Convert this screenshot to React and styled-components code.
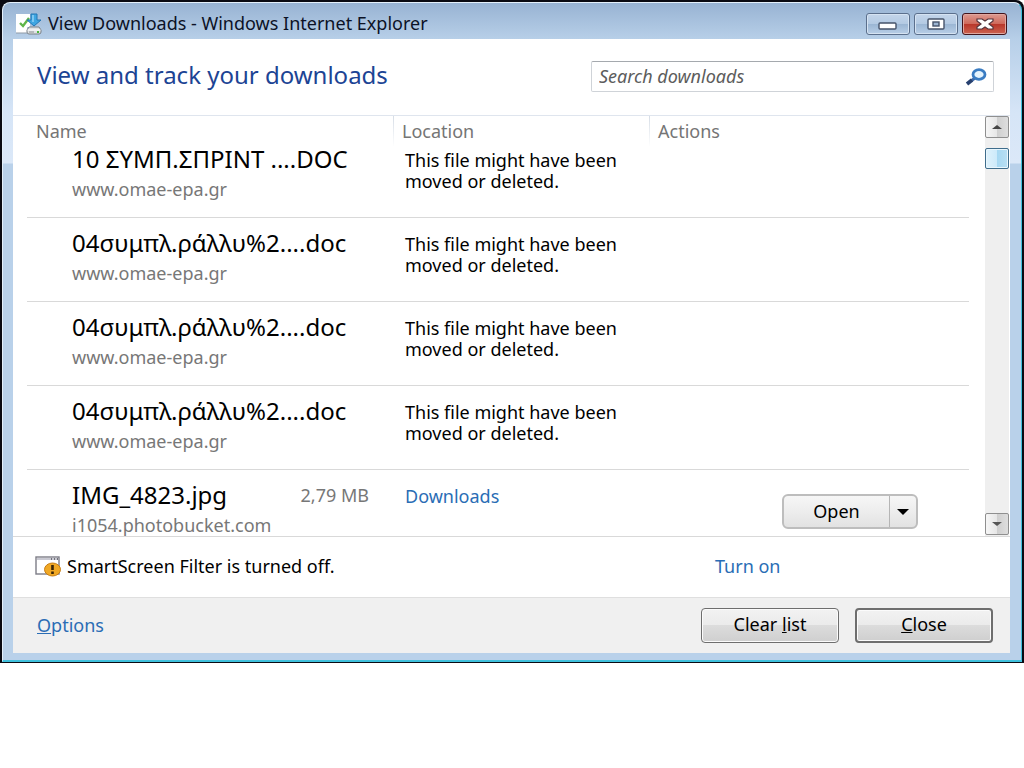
import React, { useState } from 'react'
import styled, { createGlobalStyle } from 'styled-components'

const GlobalStyle = createGlobalStyle`
  * {
    box-sizing: border-box;
  }

  body {
    margin: 0;
    background-color: #fff;
    color: #000;
    font-family: 'Noto Sans', 'Open Sans', sans-serif;
    font-size: 18px;
    line-height: 21px;
  }

  button,
  input {
    font: inherit;
    color: inherit;
  }
`

const WindowEdge = styled.div`
  background-color: #0a0a12;
  padding: 2px 2px 1px 2px;
  border-top-right-radius: 8px;
`

const WindowFrame = styled.div`
  display: flex;
  flex-direction: column;
  padding: 0 11px 7px 10px;
  border: 1px solid #e4f0fb;
  border-right-color: #3fc0dc;
  border-bottom: 2px solid #3fc0dc;
  border-radius: 8px 8px 0 0;
  background: linear-gradient(
    180deg,
    #98b3d3 0,
    #b7cfe8 36px,
    #d6e5f7 110px,
    #dbe8f8 160px,
    #b9d1ea 161px,
    #b9d1ea 100%
  );
`

const TitleBar = styled.header`
  display: flex;
  align-items: flex-start;
  justify-content: space-between;
  height: 36px;
  padding: 10px 3px 0 3px;
`

const TitleText = styled.div`
  display: flex;
  align-items: flex-start;
  gap: 6px;
  color: #0c1226;
  white-space: nowrap;
`

const WindowButtons = styled.div`
  display: flex;
  gap: 4px;
`

const WindowButton = styled.button`
  display: flex;
  align-items: center;
  justify-content: center;
  width: ${props => (props.$danger ? '45px' : '44px')};
  height: 22px;
  padding: 0;
  border: 1px solid ${props => (props.$danger ? '#43141b' : '#5b6f8c')};
  border-radius: 3px;
  box-shadow: inset 0 0 0 1px ${props => (props.$danger ? '#e0a79f' : '#d5e3f2')};
  background: ${props =>
    props.$danger
      ? 'linear-gradient(180deg, #dd9a90 0, #cf6a5c 48%, #b83529 50%, #cc6350 100%)'
      : 'linear-gradient(180deg, #c3d5ea 0, #b4cae3 48%, #9ab5d3 50%, #b8cee7 100%)'};
`

const Panel = styled.main`
  display: flex;
  flex-direction: column;
  background-color: #fff;
`

const PanelHead = styled.div`
  display: flex;
  align-items: flex-start;
  justify-content: space-between;
  height: 76px;
  padding: 22px 16px 0 24px;
`

const Heading = styled.h1`
  margin: 0;
  font-size: 24px;
  line-height: 28px;
  font-weight: 400;
  color: #1c4494;
`

const SearchBox = styled.label`
  display: flex;
  align-items: center;
  width: 403px;
  height: 31px;
  padding: 0 6px 0 7px;
  border: 1px solid #cfd3d8;
  border-top-color: #a5a9ae;
  border-radius: 2px;
`

const SearchInput = styled.input`
  flex: 1;
  min-width: 0;
  padding: 0;
  border: none;
  outline: none;
  background: none;

  &::placeholder {
    color: #5c5c5c;
    font-style: italic;
    opacity: 1;
  }
`

const ListArea = styled.div`
  display: flex;
  justify-content: space-between;
  max-height: 422px;
  overflow: hidden;
  border-top: 1px solid #dfe5ee;
  border-bottom: 1px solid #d9d9d9;
`

const DownloadTable = styled.table`
  flex: 1;
  align-self: flex-start;
  margin: 0 16px 0 14px;
  table-layout: fixed;
  border-collapse: separate;
  border-spacing: 0;
`

const HeadCell = styled.th`
  width: ${props => props.$width};
  height: 31px;
  padding: 0 0 0 9px;
  font-weight: 400;
  text-align: left;
  color: #757575;
  background: ${props =>
    props.$divider
      ? 'linear-gradient(180deg, #d6dde6 0, #fff 100%) left / 1px 100% no-repeat'
      : 'none'};
`

const Row = styled.tr`
  td {
    height: 84px;
    padding-top: 13px;
    border-bottom: 1px solid #d9d9d9;
    vertical-align: top;
  }

  &:first-child td {
    height: 71px;
    padding-top: 0;
  }
`

const NameCell = styled.td`
  padding: 0 24px 0 45px;
`

const NameLine = styled.div`
  display: flex;
  align-items: center;
  justify-content: space-between;
  height: 24px;
  white-space: nowrap;
`

const FileName = styled.span`
  font-size: 24px;
  line-height: 24px;
`

const Muted = styled.span`
  color: #777;
`

const Source = styled.div`
  margin-top: 8px;
  color: #777;
`

const LocationCell = styled.td`
  padding: 0 30px 0 12px;
`

const LocationText = styled.div`
  padding-top: 3px;
`

const ActionCell = styled.td`
  padding: 0 51px 0 0;
`

const ActionLine = styled.div`
  display: flex;
  justify-content: flex-end;
  padding-top: 11px;
`

const Link = styled.a`
  color: #2a6db5;
  text-decoration: none;
`

const SplitButton = styled.div`
  display: flex;
  width: 136px;
  height: 35px;
  border: 2px solid #bdbdbd;
  border-radius: 6px;
  background: linear-gradient(180deg, #f6f6f6 0, #ededed 50%, #e2e2e2 100%);
`

const SplitPart = styled.button`
  display: flex;
  align-items: center;
  justify-content: center;
  flex: ${props => (props.$main ? '1' : '0 0 27px')};
  padding: 0;
  border: none;
  border-left: ${props => (props.$main ? 'none' : '1px solid #b5b5b5')};
  background: none;
`

const ScrollBar = styled.div`
  display: flex;
  flex-direction: column;
  width: 24px;
  margin-right: 1px;
  padding-bottom: 1px;
  background-color: #efefef;
`

const ScrollButton = styled.button`
  display: flex;
  align-items: center;
  justify-content: center;
  height: 22px;
  padding: 0;
  border: 1px solid #8f8f8f;
  border-radius: 2px;
  background: linear-gradient(90deg, #f6f6f6 0, #e6e6e6 50%, #cfcfcf 52%, #dedede 100%);
`

const ScrollTrack = styled.div`
  flex: 1;
  padding-top: 10px;
`

const ScrollThumb = styled.div`
  height: 21px;
  border: 1px solid #3f6d8c;
  border-radius: 2px;
  box-shadow: inset 0 0 0 1px #e8f6fd;
  background: linear-gradient(90deg, #dff2fc 0, #cdeafa 48%, #a6d8f2 50%, #b9dff3 100%);
`

const StatusBar = styled.div`
  display: flex;
  align-items: center;
  height: 60px;
  padding: 0 0 2px 22px;
`

const StatusText = styled.div`
  display: flex;
  align-items: center;
  flex: 0 0 680px;
  gap: 6px;
`

const Footer = styled.footer`
  display: flex;
  align-items: center;
  justify-content: space-between;
  height: 56px;
  padding: 0 17px 0 24px;
  border-top: 1px solid #dfdfdf;
  background-color: #f0f0f0;
`

const FooterButtons = styled.div`
  display: flex;
  gap: 16px;
`

const FooterButton = styled.button`
  width: 138px;
  height: 35px;
  padding: 0 0 2px;
  border: ${props => (props.$strong ? '2px' : '1px')} solid #6e6e6e;
  border-radius: 4px;
  box-shadow: inset 0 0 0 1px #fbfbfb;
  background: linear-gradient(180deg, #f2f2f2 0, #ebebeb 48%, #dcdcdc 50%, #cfcfcf 100%);
`

const MOVED = 'This file might have been moved or deleted.'

const downloads = [
  { id: 1, name: '10 ΣΥΜΠ.ΣΠΡΙΝΤ ....DOC', source: 'www.omae-epa.gr' },
  { id: 2, name: '04συμπλ.ράλλυ%2....doc', source: 'www.omae-epa.gr' },
  { id: 3, name: '04συμπλ.ράλλυ%2....doc', source: 'www.omae-epa.gr' },
  { id: 4, name: '04συμπλ.ράλλυ%2....doc', source: 'www.omae-epa.gr' },
  {
    id: 5,
    name: 'IMG_4823.jpg',
    source: 'i1054.photobucket.com',
    size: '2,79 MB',
    folder: 'Downloads'
  }
]

function DownloadIcon() {
  return (
    <svg width="26" height="22" viewBox="0 0 26 22" aria-hidden="true">
      <path d="M0 1h14v13h-3v6H0z" fill="#fff" />
      <path d="M0 20h11" stroke="#8d99a6" />
      <path d="M4 10l3 3 6-8" fill="none" stroke="#5fb54a" strokeWidth="2.4" />
      <path d="M15 1h6v6h4l-7 6-7-6h4z" fill="#3ea6e2" stroke="#2377b4" />
      <path d="M17 2v7" stroke="#8fd0f5" strokeWidth="1.6" />
      <path d="M13 14h10l2 3v2q0 2-2 2H13q-2 0-2-2v-2z" fill="#dfe2e4" stroke="#7b8288" />
      <path d="M11.5 17h13" stroke="#fff" />
      <path d="M13 19h5" stroke="#8b9196" />
      <path d="M21 19h2" stroke="#49b83c" strokeWidth="2" />
    </svg>
  )
}

function SearchIcon() {
  return (
    <svg width="22" height="20" viewBox="0 0 22 20" aria-hidden="true">
      <path d="M10 11l-4 3" stroke="#3f6aa8" strokeWidth="3" />
      <path d="M7 13l-5 4" stroke="#27406f" strokeWidth="3.8" />
      <ellipse cx="14" cy="7.5" rx="6" ry="4.8" fill="#e4f3fd" stroke="#3a7cc2" strokeWidth="2.8" />
    </svg>
  )
}

function SmartScreenIcon() {
  return (
    <svg width="26" height="21" viewBox="0 0 26 21" aria-hidden="true">
      <rect x="1" y="1" width="23" height="17" fill="#fff" stroke="#7d7d87" strokeWidth="1.4" />
      <path d="M2 3h21" stroke="#c9c9d2" strokeWidth="2" />
      <path d="M16 3h1M19 3h1M22 3h1" stroke="#55555f" strokeWidth="1.4" />
      <ellipse cx="17.5" cy="13.5" rx="8" ry="6.5" fill="#f0a824" stroke="#c87d12" />
      <path d="M17.5 9v5M17.5 15.5v2.5" stroke="#3a2405" strokeWidth="2.6" />
    </svg>
  )
}

function MinimizeIcon() {
  return (
    <svg width="20" height="12" viewBox="0 0 20 12" aria-hidden="true">
      <rect x="1" y="5" width="17" height="6" rx="1" fill="#fff" stroke="#46536a" strokeWidth="1.4" />
    </svg>
  )
}

function MaximizeIcon() {
  return (
    <svg width="18" height="12" viewBox="0 0 18 12" aria-hidden="true">
      <rect x="1" y="1" width="16" height="10" rx="1" fill="#fff" stroke="#46536a" strokeWidth="1.4" />
      <rect x="6" y="4" width="6" height="4" fill="#9db6d2" stroke="#46536a" strokeWidth="1.4" />
    </svg>
  )
}

function CloseIcon() {
  return (
    <svg width="20" height="14" viewBox="0 0 20 14" aria-hidden="true">
      <path
        d="M2 2h5l3 2 3-2h5v2l-4 3 4 3v2h-5l-3-2-3 2H2v-2l4-3-4-3z"
        fill="#fff"
        stroke="#54343c"
        strokeWidth="1.2"
      />
    </svg>
  )
}

function Arrow({ up, width = 10, height = 4, color = '#000' }) {
  return (
    <svg
      width={width}
      height={height}
      viewBox="0 0 12 6"
      preserveAspectRatio="none"
      aria-hidden="true">
      <path d={up ? 'M0 6l6-6 6 6z' : 'M0 0h12L6 6z'} fill={color} />
    </svg>
  )
}

function App() {
  const [search, setSearch] = useState('')

  return (
    <>
      <GlobalStyle />
      <WindowEdge>
        <WindowFrame>
          <TitleBar>
            <TitleText>
              <DownloadIcon />
              View Downloads - Windows Internet Explorer
            </TitleText>
            <WindowButtons>
              <WindowButton aria-label="Minimize">
                <MinimizeIcon />
              </WindowButton>
              <WindowButton aria-label="Maximize">
                <MaximizeIcon />
              </WindowButton>
              <WindowButton $danger aria-label="Close window">
                <CloseIcon />
              </WindowButton>
            </WindowButtons>
          </TitleBar>

          <Panel>
            <PanelHead>
              <Heading>View and track your downloads</Heading>
              <SearchBox>
                <SearchInput
                  aria-label="Search downloads"
                  placeholder="Search downloads"
                  value={search}
                  onChange={e => setSearch(e.target.value)}
                />
                <SearchIcon />
              </SearchBox>
            </PanelHead>

            <ListArea>
              <DownloadTable>
                <thead>
                  <tr>
                    <HeadCell $width="366px">Name</HeadCell>
                    <HeadCell $width="256px" $divider>
                      Location
                    </HeadCell>
                    <HeadCell $divider>Actions</HeadCell>
                  </tr>
                </thead>
                <tbody>
                  {downloads.map(item => (
                    <Row key={item.id}>
                      <NameCell>
                        <NameLine>
                          <FileName>{item.name}</FileName>
                          {item.size && <Muted>{item.size}</Muted>}
                        </NameLine>
                        <Source>{item.source}</Source>
                      </NameCell>
                      <LocationCell>
                        <LocationText>
                          {item.folder ? <Link href="#downloads">{item.folder}</Link> : MOVED}
                        </LocationText>
                      </LocationCell>
                      <ActionCell>
                        {item.folder && (
                          <ActionLine>
                            <SplitButton>
                              <SplitPart $main>Open</SplitPart>
                              <SplitPart aria-label="More actions">
                                <Arrow width={12} height={6} />
                              </SplitPart>
                            </SplitButton>
                          </ActionLine>
                        )}
                      </ActionCell>
                    </Row>
                  ))}
                </tbody>
              </DownloadTable>
              <ScrollBar>
                <ScrollButton aria-label="Scroll up">
                  <Arrow up color="#444" />
                </ScrollButton>
                <ScrollTrack>
                  <ScrollThumb />
                </ScrollTrack>
                <ScrollButton aria-label="Scroll down">
                  <Arrow color="#555" />
                </ScrollButton>
              </ScrollBar>
            </ListArea>

            <StatusBar>
              <StatusText>
                <SmartScreenIcon />
                SmartScreen Filter is turned off.
              </StatusText>
              <Link href="#smartscreen">Turn on</Link>
            </StatusBar>

            <Footer>
              <Link href="#options">
                <u>O</u>ptions
              </Link>
              <FooterButtons>
                <FooterButton>
                  Clear <u>l</u>ist
                </FooterButton>
                <FooterButton $strong>
                  <u>C</u>lose
                </FooterButton>
              </FooterButtons>
            </Footer>
          </Panel>
        </WindowFrame>
      </WindowEdge>
    </>
  )
}

export default App
